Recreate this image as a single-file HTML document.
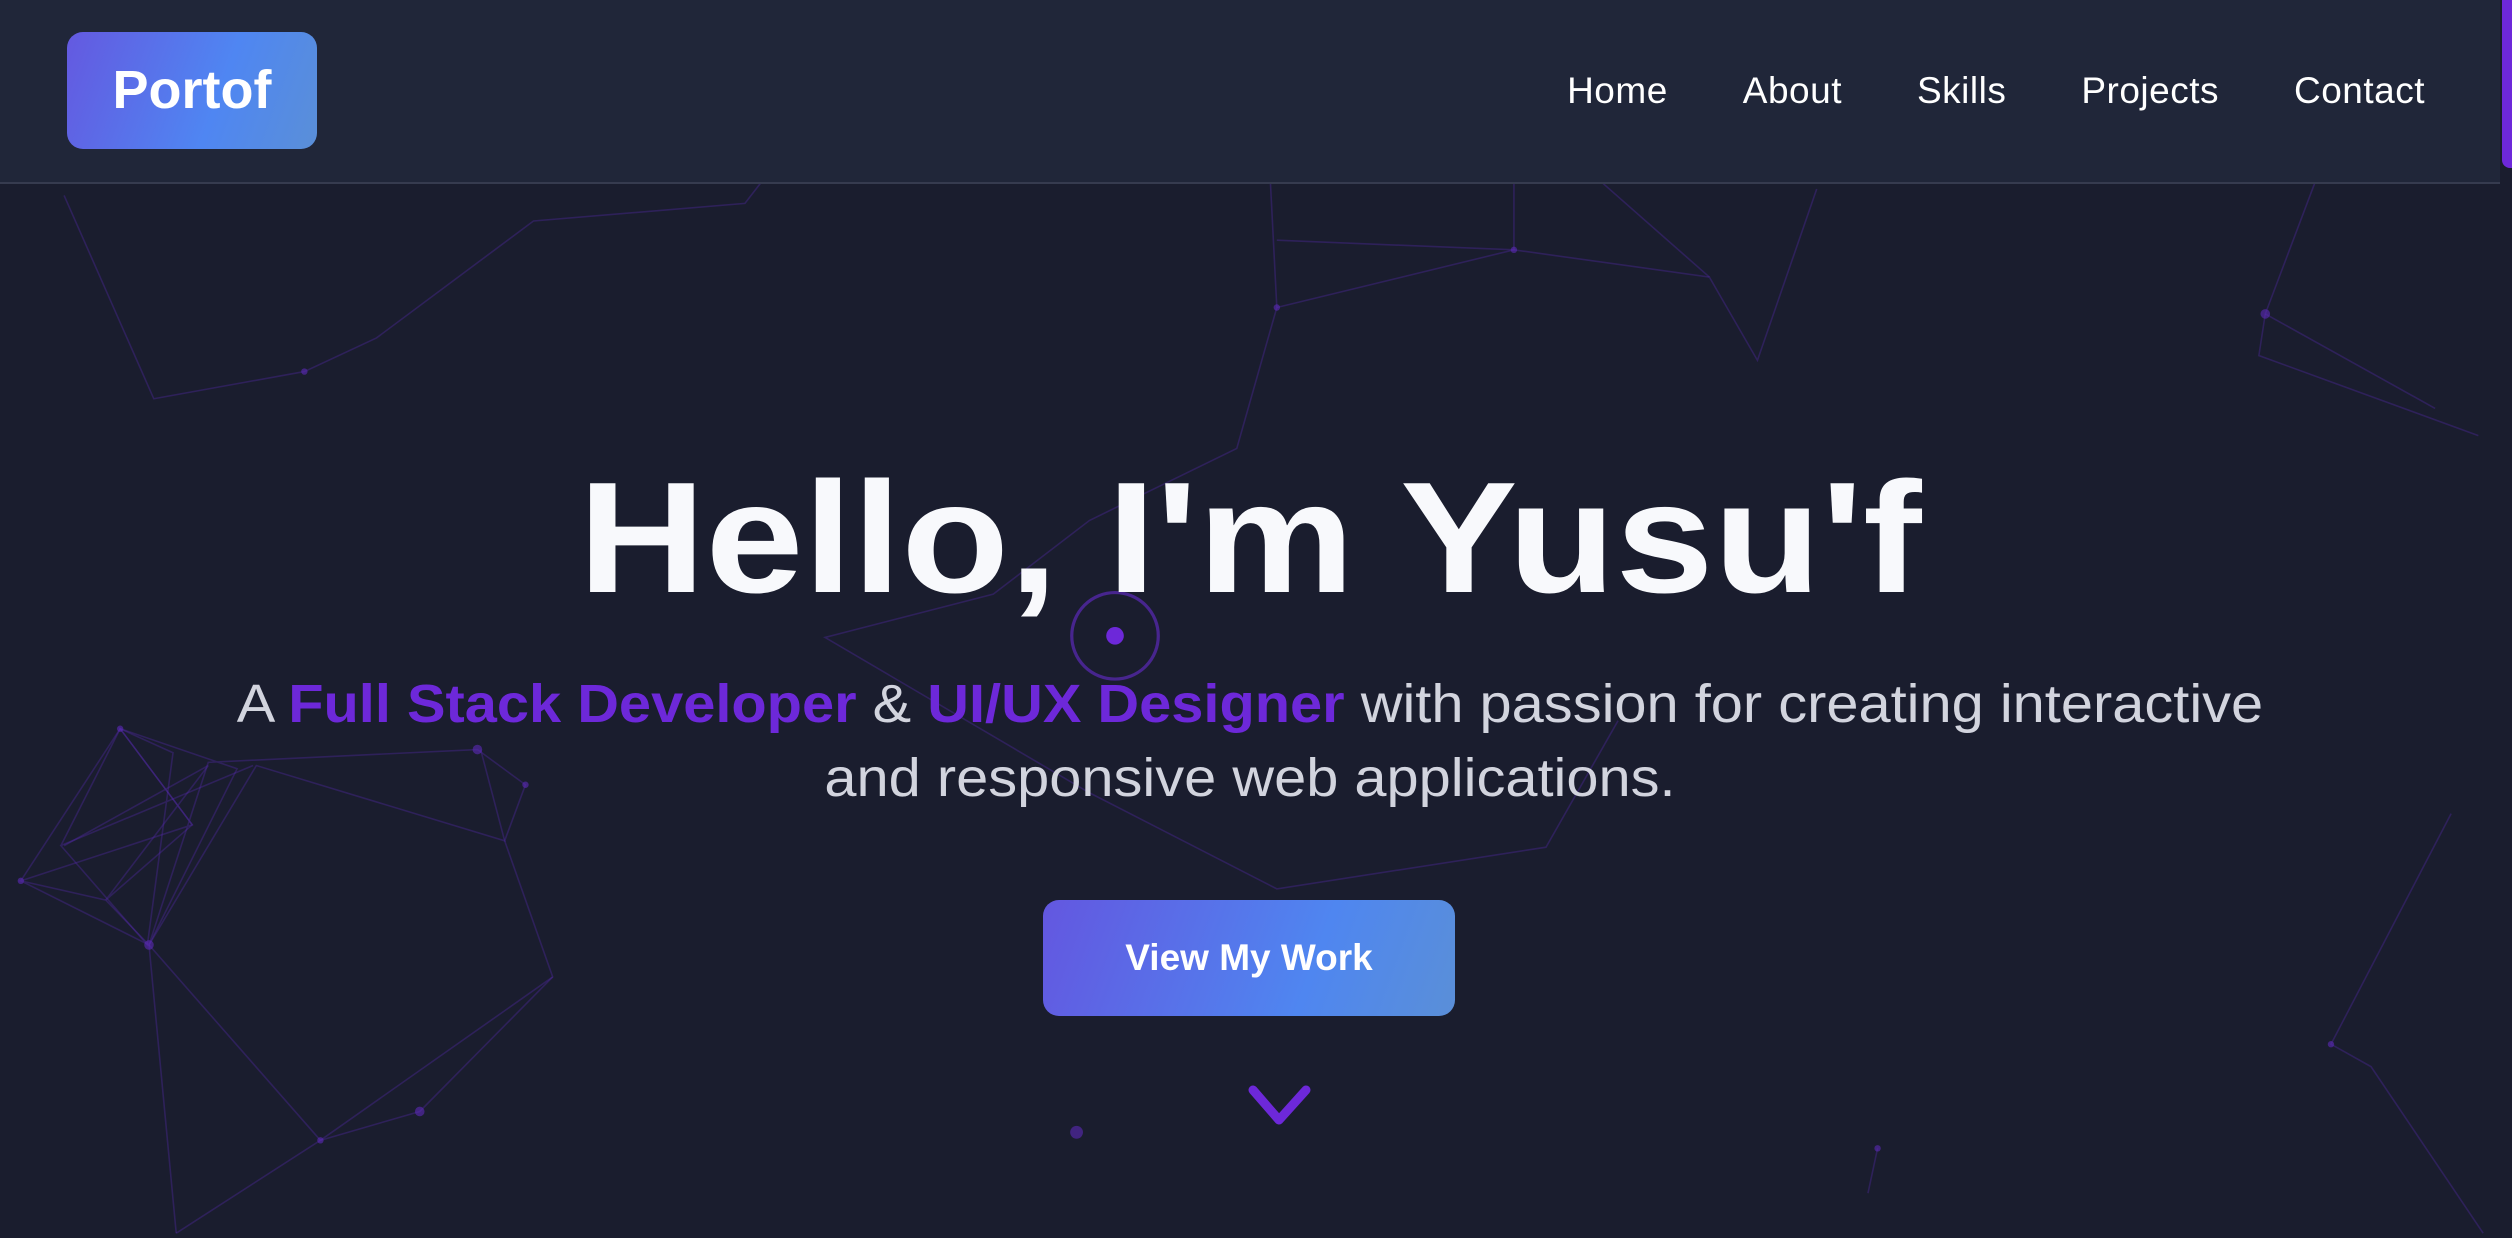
<!DOCTYPE html>
<html><head><meta charset="utf-8"><style>
html,body{margin:0;padding:0}
body{width:2512px;height:1238px;overflow:hidden;background:#1a1d2e;position:relative;font-family:"Liberation Sans",sans-serif}
svg.bg{position:absolute;left:0;top:0;width:2512px;height:1238px}
.nav{position:absolute;left:0;top:0;width:2500px;height:182px;background:#202639;border-bottom:2px solid #363b4f}
.logo{position:absolute;left:67px;top:32px;width:250px;height:117px;border-radius:16px;background:linear-gradient(110deg,#6459e0,#4f86f2 60%,#5a8fd8);color:#fff;font-weight:bold;font-size:54px;line-height:117px;text-align:center}
.links{position:absolute;right:75px;top:70px;font-size:37px;color:#fff;letter-spacing:0.5px}
.links span{margin-left:75px}
.thumb{position:absolute;right:0;top:0;width:10px;height:168px;background:#6d28d9;border-radius:0 0 0 8px}
h1{position:absolute;left:0;width:2500px;top:438px;margin:0;text-align:center;font-size:158px;line-height:200px;font-weight:bold;color:#f8f9fc;transform:scaleX(1.115);transform-origin:1250px 0}
.sub{position:absolute;left:0;width:2500px;top:667px;text-align:center;font-size:54px;line-height:74px;color:#d2d4de;transform:scaleX(1.07);transform-origin:1250px 0}
.sub b{color:#6d28d9;font-weight:bold}
.btn{position:absolute;left:1043px;top:900px;width:412px;height:116px;border-radius:16px;background:linear-gradient(110deg,#6357e0,#4f86f0 65%,#5a8fd8);color:#fff;font-weight:bold;font-size:37px;line-height:116px;text-align:center}
</style></head><body>
<svg class="bg" viewBox="0 0 1568 773" preserveAspectRatio="none">
<g stroke="#5b2ab8" stroke-opacity=".32" stroke-width="1" fill="none">
<polyline points="40,122 96,249 190,232 235,211 333,138 465,127 475,114"/>
<polyline points="793,114 797,192 772,280 680,325 620,371 515,398 680,495 797,555 965,529 1010,450"/>
<polyline points="797,192 945,156 1067,173 1097,225 1134,118"/>
<polyline points="797,150 945,156 945,114"/>
<polyline points="1067,173 1000,114"/>
<polyline points="1445,114 1414,196 1410,222 1547,272"/>
<polyline points="1414,196 1520,255"/>
<polyline points="1530,508 1455,652 1480,666 1550,770"/>
<polyline points="1172,717 1166,745"/>
<polyline points="75,455 13,550 93,590 148,480 75,455 120,515 13,550 66,562 93,590 130,476 298,468 328,490 315,525 345,610 262,694 200,712 110,770"/>
<polyline points="300,468 315,525 160,478 93,590 200,712"/>
<polyline points="38,528 75,455 108,470 92,590 38,528 158,478"/>
<polyline points="40,528 130,478 66,562 120,515 75,455"/>
<polyline points="93,590 110,770"/>
<polyline points="345,610 200,712"/>
</g>
<g fill="#5b2ab8" fill-opacity=".6">
<circle cx="190" cy="232" r="2"/><circle cx="797" cy="192" r="2"/><circle cx="945" cy="156" r="2"/>
<circle cx="1414" cy="196" r="3"/><circle cx="93" cy="590" r="3"/><circle cx="13" cy="550" r="2"/>
<circle cx="262" cy="694" r="3"/><circle cx="200" cy="712" r="2"/><circle cx="298" cy="468" r="3"/>
<circle cx="75" cy="455" r="2"/><circle cx="1455" cy="652" r="2"/><circle cx="672" cy="707" r="4"/>
<circle cx="328" cy="490" r="2"/><circle cx="1172" cy="717" r="2"/>
</g>
<circle cx="696" cy="397" r="27" fill="none" stroke="#5b2ab8" stroke-opacity=".7" stroke-width="2"/>
<circle cx="696" cy="397" r="5.5" fill="#6d28d9"/>
</svg>
<div class="nav"><div class="logo">Portof</div>
<div class="links"><span>Home</span><span>About</span><span>Skills</span><span>Projects</span><span>Contact</span></div></div>
<div class="thumb"></div>
<h1>Hello, I'm Yusu'f</h1>
<div class="sub">A <b>Full Stack Developer</b> &amp; <b>UI/UX Designer</b> with passion for creating interactive<br>and responsive web applications.</div>
<div class="btn">View My Work</div>
<svg style="position:absolute;left:0;top:0" width="2512" height="1238"><polyline points="1253,1090 1279,1120 1306,1090" fill="none" stroke="#6d28d9" stroke-width="9" stroke-linecap="round" stroke-linejoin="round"/></svg>
</body></html>
